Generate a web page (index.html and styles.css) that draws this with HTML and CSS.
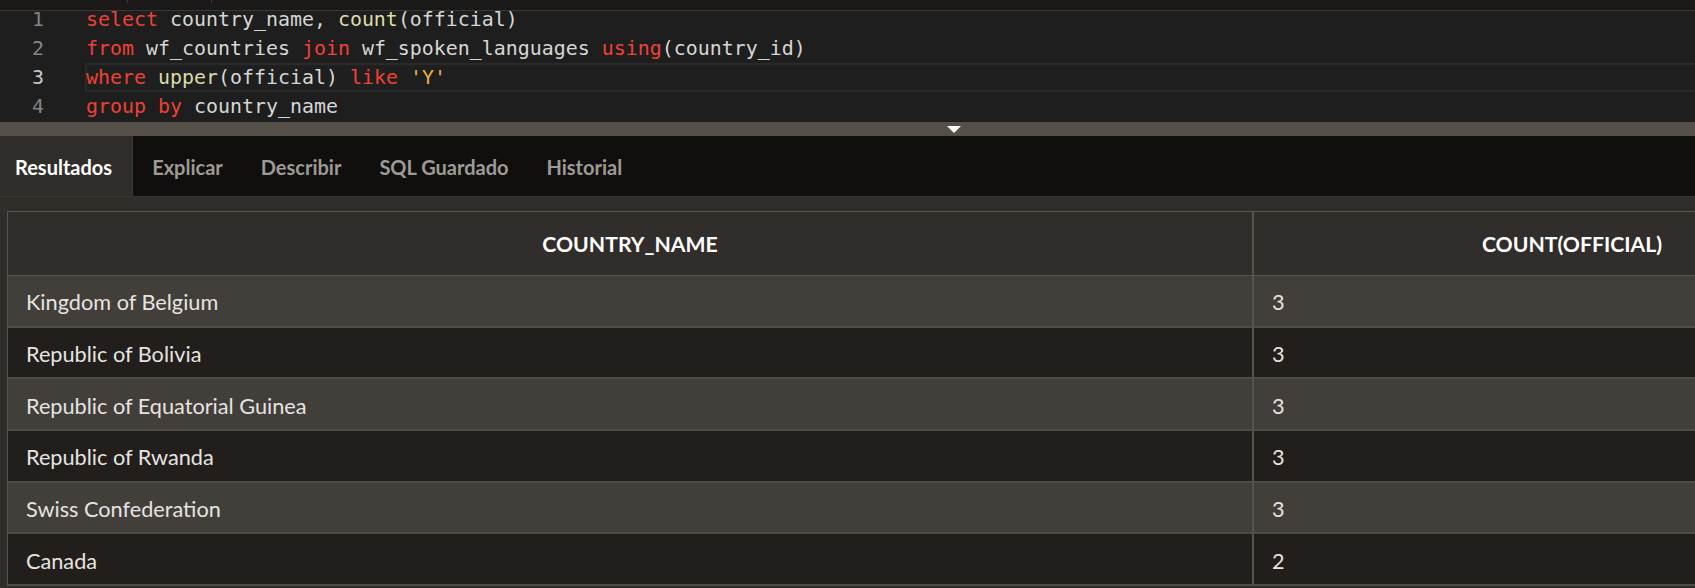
FILE: index.html
```html
<!DOCTYPE html>
<html lang="es">
<head>
<meta charset="utf-8">
<title>SQL Commands</title>
<link rel="stylesheet" href="styles.css">
</head>
<body>
<div class="topbar"><span class="tick t1"></span><span class="tick t2"></span></div>
<div class="editor">
  <div class="lines">
    <div class="line"><span class="ln">1</span><span class="code"><span class="kw">select</span> country_name, <span class="fn">count</span>(official)</span></div>
    <div class="line"><span class="ln">2</span><span class="code"><span class="kw">from</span> wf_countries <span class="kw">join</span> wf_spoken_languages <span class="kw">using</span>(country_id)</span></div>
    <div class="line current"><span class="ln">3</span><span class="code"><span class="kw">where</span> <span class="fn">upper</span>(official) <span class="kw">like</span> <span class="str">'Y'</span></span></div>
    <div class="line"><span class="ln">4</span><span class="code"><span class="kw">group</span> <span class="kw">by</span> country_name</span></div>
  </div>
</div>
<div class="splitter"><span class="arrow"></span></div>
<div class="tabs">
  <div class="tab active">Resultados</div>
  <div class="tab">Explicar</div>
  <div class="tab">Describir</div>
  <div class="tab">SQL Guardado</div>
  <div class="tab">Historial</div>
</div>
<div class="results">
  <div class="grid">
    <div class="th c1">COUNTRY_NAME</div>
    <div class="th c2">COUNT(OFFICIAL)</div>
    <div class="td c1 odd">Kingdom of Belgium</div>
    <div class="td c2 odd">3</div>
    <div class="td c1">Republic of Bolivia</div>
    <div class="td c2">3</div>
    <div class="td c1 odd">Republic of Equatorial Guinea</div>
    <div class="td c2 odd">3</div>
    <div class="td c1">Republic of Rwanda</div>
    <div class="td c2">3</div>
    <div class="td c1 odd">Swiss Confederation</div>
    <div class="td c2 odd">3</div>
    <div class="td c1">Canada</div>
    <div class="td c2">2</div>
  </div>
</div>
</body>
</html>
```

FILE: styles.css
```css
* { box-sizing: border-box; }
html, body {
  margin: 0;
  padding: 0;
}
body {
  width: 1695px;
  height: 588px;
  overflow: hidden;
  background: #312d2a;
  font-family: Lato, "Noto Sans", sans-serif;
}

.topbar {
  height: 11px;
  background: #1b1917;
  border-bottom: 1px solid #3a3734;
  display: flex;
  align-items: flex-start;
}
.tick {
  width: 1px;
  height: 3px;
  background: #3c3a37;
}
.t1 { margin-left: 127px; }
.t2 { margin-left: 83px; }

.editor {
  display: flow-root;
  height: 111px;
  background: #1e1e1e;
}
.lines {
  margin-top: -6.5px;
  font-family: "DejaVu Sans Mono", "Liberation Mono", monospace;
  font-size: 19.93px;
  line-height: 29.2px;
  color: #d6d6d6;
}
.line {
  display: flex;
  white-space: pre;
}
.ln {
  width: 44px;
  text-align: right;
  color: #858585;
  flex: none;
}
.code {
  flex: 1;
  margin-left: 41px;
  margin-right: -10px;
  padding-left: 1px;
}
.line.current .ln { color: #c6c6c6; }
.line.current .code {
  background: #1f1f1f;
  box-shadow: inset 0 0 0 2px #2a2a2a;
}
.kw { color: #ef4135; }
.fn { color: #dcdcaa; }
.str { color: #e7b04c; }

.splitter {
  height: 14px;
  background: #545049;
  display: flex;
  align-items: flex-start;
  padding: 4px 0 0 947px;
}
.arrow {
  width: 0;
  height: 0;
  border-left: 7px solid transparent;
  border-right: 7px solid transparent;
  border-top: 7px solid #ffffff;
}

.tabs {
  height: 61px;
  background: #100f0e;
  border-bottom: 1px solid #3a3632;
  display: flex;
}
.tab {
  display: flex;
  align-items: center;
  padding: 1px 19px 0;
  font-weight: 700;
  font-size: 20px;
  color: #9e9a95;
}
.tab.active {
  background: #312d2a;
  color: #ffffff;
  padding: 1px 20px 0 15px;
  border-right: 1px solid #3a3632;
}

.results {
  padding: 14px 0 0 7px;
}
.grid {
  display: grid;
  grid-template-columns: 1246px 636px;
  width: 1883px;
  border-left: 1px solid #57534e;
  border-top: 1px solid #57534e;
}
.th {
  height: 64px;
  background: #312d2a;
  border-bottom: 1px solid #57534e;
  display: flex;
  align-items: center;
  justify-content: center;
  padding-top: 1px;
  font-weight: 700;
  font-size: 21.2px;
  color: #ffffff;
}
.c1 { border-right: 2px solid #57534e; }
.td {
  height: 51.7px;
  background: #211e1b;
  border-bottom: 2px solid #4f4b46;
  display: flex;
  align-items: center;
  padding: 3px 0 0 18px;
  font-size: 21.7px;
  color: #e6e4e1;
}
.td.odd { background: #423e39; }
```
